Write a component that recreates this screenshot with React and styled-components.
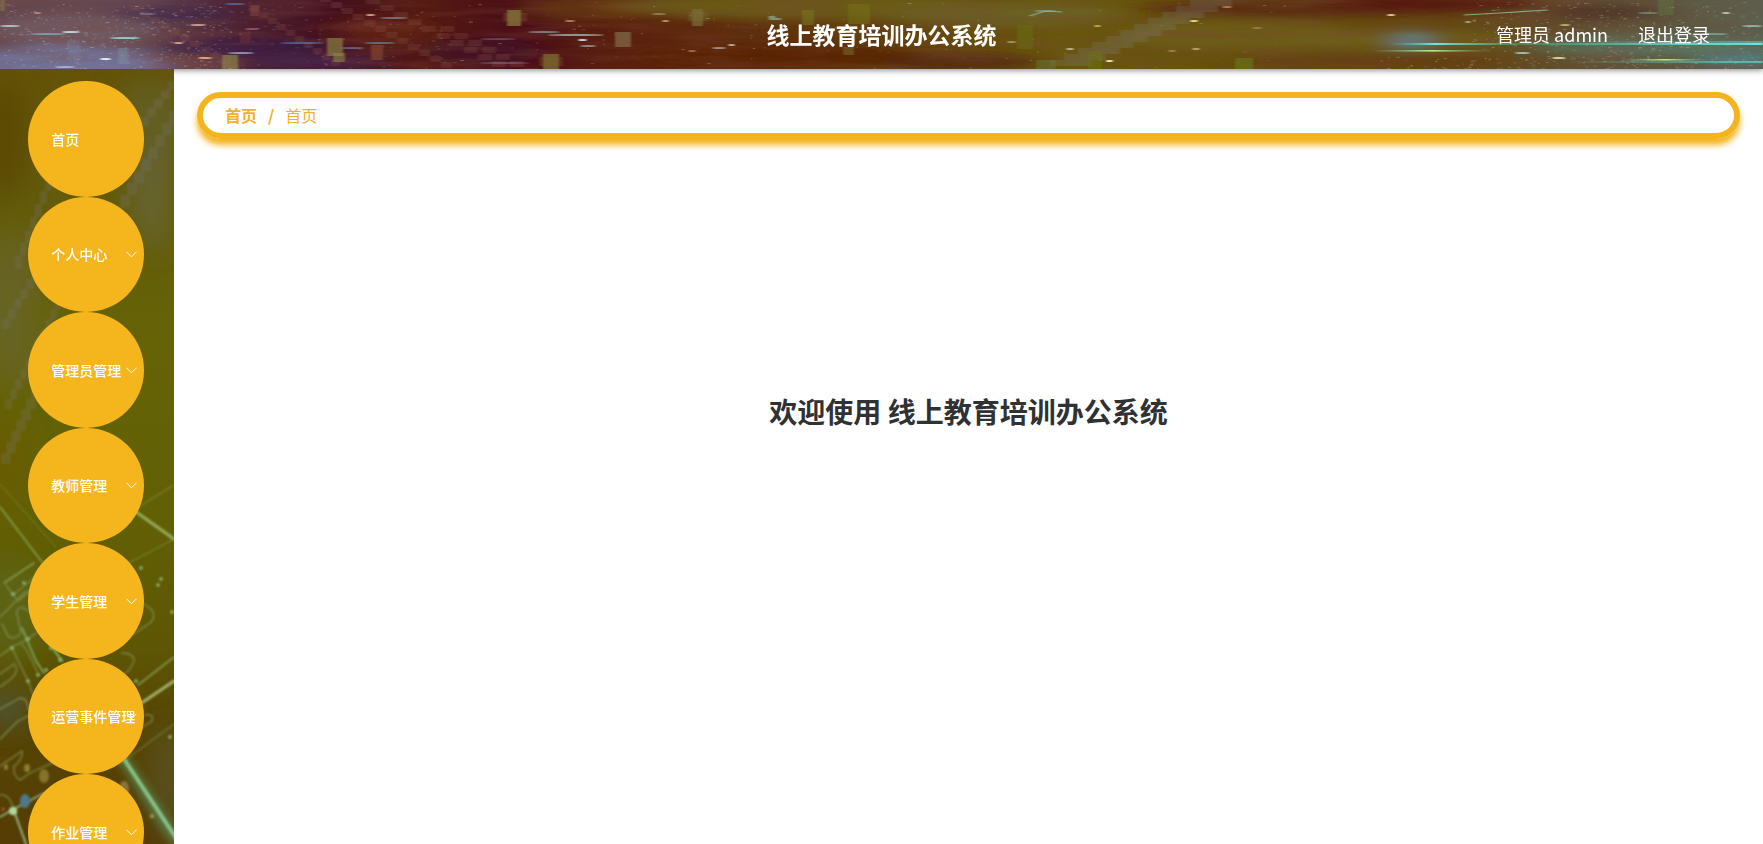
import React from 'react';
import styled, { createGlobalStyle } from 'styled-components';

const MENU = [
  { name: '首页' },
  { name: '个人中心', children: true },
  { name: '管理员管理', children: true },
  { name: '教师管理', children: true },
  { name: '学生管理', children: true },
  { name: '运营事件管理', children: true },
  { name: '作业管理', children: true },
];

// small seeded generator, so the sparkles stay put between renders
const makeRandom = seed => {
  let s = seed;
  return () => {
    s = (s * 16807) % 2147483647;
    return s / 2147483647;
  };
};

const makeSparks = (seed, count, x0, x1, y0, y1, colors) => {
  const rnd = makeRandom(seed);
  return Array.from({ length: count }, () => ({
    x: x0 + rnd() * (x1 - x0),
    y: y0 + rnd() * (y1 - y0),
    w: 1 + rnd() * 3,
    o: 0.1 + rnd() * 0.35,
    c: colors[Math.floor(rnd() * colors.length)],
  }));
};

const SPARKS = [
  ...makeSparks(11, 420, 0, 230, 4, 69, ['#c9b6bf', '#9aa0cc', '#d0a890']),
  ...makeSparks(23, 160, 200, 460, 2, 69, ['#8a6a9c', '#a07080', '#6f78b0']),
  ...makeSparks(37, 100, 460, 1300, 2, 69, ['#c09070', '#a8a070', '#b0b0a0']),
  ...makeSparks(53, 380, 1470, 1763, 2, 69, ['#b8a880', '#90a890', '#c8b8a0']),
  ...makeSparks(71, 130, 1380, 1763, 56, 69, ['#b8a880', '#a8b0a0']),
];

// bright streaks: x, y, width, color, opacity
const STREAKS = [
  [0, 26, 20, '#c5d5dc', 0.8],
  [30, 34, 36, '#7fb5c5', 0.7],
  [62, 32, 18, '#d5efef', 0.8],
  [110, 38, 30, '#9fdcd5', 0.85],
  [100, 59, 11, '#ffffff', 0.85],
  [55, 67, 20, '#b8c8f0', 0.7],
  [34, 13, 7, '#ddb0a0', 0.6],
  [140, 14, 16, '#8090c0', 0.5],
  [190, 25, 16, '#d8b8a8', 0.8],
  [174, 43, 9, '#f0b898', 0.8],
  [198, 58, 14, '#f0b090', 0.9],
  [225, 4, 20, '#5878b8', 0.7],
  [245, 29, 14, '#d08890', 0.5],
  [228, 53, 26, '#b0b8e0', 0.7],
  [280, 43, 44, '#5878a8', 0.7],
  [340, 48, 24, '#7088b0', 0.6],
  [366, 15, 9, '#e8c0a0', 0.8],
  [380, 18, 28, '#7f9098', 0.7],
  [364, 43, 32, '#6898b0', 0.6],
  [480, 39, 36, '#6f7c90', 0.5],
  [528, 32, 32, '#8fa0a8', 0.7],
  [548, 35, 56, '#a8b8b8', 0.75],
  [578, 40, 9, '#d8e8f0', 0.9],
  [580, 46, 16, '#b0b0a8', 0.7],
  [565, 21, 10, '#d0a080', 0.7],
  [480, 63, 50, '#88708a', 0.5],
  [652, 14, 14, '#a8a078', 0.6],
  [662, 21, 7, '#e0c090', 0.7],
  [712, 48, 14, '#a8a898', 0.8],
  [728, 45, 7, '#d8d0b8', 0.8],
  [688, 51, 8, '#c0a080', 0.6],
  [768, 17, 8, '#90b8b8', 0.7],
  [768, 19, 14, '#90b8b8', 0.7],
  [1007, 42, 9, '#a0b058', 0.8],
  [1034, 11, 22, '#8ac0d0', 0.5],
  [1066, 49, 8, '#d0c8b0', 0.8],
  [1094, 26, 7, '#d8d060', 0.7],
  [1106, 61, 7, '#f8f8c0', 0.95],
  [1190, 21, 8, '#f0e8a0', 0.9],
  [1168, 51, 8, '#a89858', 0.7],
  [1192, 49, 8, '#d0b870', 0.8],
  [1222, 7, 10, '#c89868', 0.7],
  [1252, 28, 10, '#a89860', 0.6],
  [1387, 15, 8, '#f0d0a8', 0.9],
  [1465, 22, 6, '#c8c090', 0.8],
  [1560, 25, 10, '#e0d090', 0.7],
  [1515, 53, 15, '#b8d8c8', 0.8],
  [1552, 58, 13, '#e8e0a8', 0.9],
  [1638, 13, 20, '#8aa098', 0.6],
  [1722, 13, 8, '#e0d8b8', 0.8],
  [1742, 26, 20, '#a8d0c8', 0.7],
  [1700, 34, 28, '#80b0a8', 0.7],
];

// blocks: x, y, width, height, color, opacity
const BLOCKS = [
  [0, 0, 5, 11, '#8a8448', 0.5],
  [118, 48, 10, 16, '#8099a8', 0.4],
  [68, 40, 12, 21, '#8095b8', 0.2],
  [222, 55, 16, 14, '#8c8048', 0.7],
  [250, 5, 9, 11, '#8a4a40', 0.5],
  [240, 32, 11, 11, '#7a3a3a', 0.4],
  [327, 38, 16, 18, '#85783c', 0.75],
  [333, 53, 12, 9, '#918848', 0.6],
  [371, 45, 12, 15, '#905030', 0.55],
  [507, 10, 14, 16, '#85743a', 0.8],
  [503, 13, 24, 8, '#85743a', 0.25],
  [543, 54, 16, 15, '#7e6832', 0.8],
  [539, 57, 24, 9, '#7e6832', 0.3],
  [615, 32, 16, 15, '#80694a', 0.75],
  [692, 9, 11, 17, '#7c6c38', 0.7],
  [688, 12, 20, 9, '#7c6c38', 0.3],
  [802, 10, 12, 15, '#767420', 0.6],
  [848, 4, 22, 20, '#74741a', 0.5],
  [843, 47, 11, 8, '#787430', 0.5],
  [1017, 25, 16, 24, '#687012', 0.45],
  [1036, 60, 20, 9, '#68803c', 0.4],
  [1088, 51, 14, 18, '#6c7818', 0.45],
  [1235, 58, 18, 11, '#687c20', 0.6],
  [1658, 0, 16, 15, '#607440', 0.5],
];

const makeStairs = (x, y, dx, dy, count, w, h) =>
  Array.from({ length: count }, (_, i) => [x + i * dx, y + i * dy, w, h]);

const HEADER_STAIRS = [
  ...makeStairs(250, 6, 9, 6, 10, 9, 6),
  ...makeStairs(320, -4, 11, 6, 12, 11, 6),
  ...makeStairs(366, -2, 14, 7, 10, 14, 6),
  ...makeStairs(130, 5, 10, 6, 11, 10, 6),
  ...makeStairs(440, 26, 14, 7, 7, 14, 6),
];

const BAND_STAIRS = [
  ...makeStairs(1050, 60, 14, -6, 11, 42, 6),
  ...makeStairs(1066, 60, 14, -6, 10, 22, 6),
];

const GlobalStyle = createGlobalStyle`
  * {
    box-sizing: border-box;
  }

  body {
    margin: 0;
    background: #fff;
    font-family: 'Noto Sans CJK SC', 'Noto Sans', sans-serif;
  }

  button {
    font-family: inherit;
  }
`;

const HeaderArt = () => (
  <Backdrop viewBox="0 0 1763 69" preserveAspectRatio="none" aria-hidden="true">
    <defs>
      <linearGradient id="headBase">
        <stop offset="0" stopColor="#65484f" />
        <stop offset="0.08" stopColor="#664a54" />
        <stop offset="0.14" stopColor="#4c2032" />
        <stop offset="0.19" stopColor="#45101f" />
        <stop offset="0.24" stopColor="#551c12" />
        <stop offset="0.29" stopColor="#4b0d18" />
        <stop offset="0.35" stopColor="#5a200d" />
        <stop offset="0.43" stopColor="#5f300e" />
        <stop offset="0.5" stopColor="#63410c" />
        <stop offset="0.6" stopColor="#69570f" />
        <stop offset="0.72" stopColor="#674f10" />
        <stop offset="0.82" stopColor="#634812" />
        <stop offset="0.9" stopColor="#625032" />
        <stop offset="1" stopColor="#5b6150" />
      </linearGradient>
      <linearGradient id="beam">
        <stop offset="0" stopColor="#40c8b8" stopOpacity="0" />
        <stop offset="0.12" stopColor="#70e8d8" />
        <stop offset="0.35" stopColor="#48a878" stopOpacity="0.5" />
        <stop offset="0.7" stopColor="#58c8b8" stopOpacity="0.8" />
        <stop offset="1" stopColor="#70f0e8" />
      </linearGradient>
      <linearGradient id="beamGlow">
        <stop offset="0" stopColor="#60d8d0" stopOpacity="0" />
        <stop offset="1" stopColor="#60d8d0" />
      </linearGradient>
      <linearGradient id="shortBeam">
        <stop offset="0" stopColor="#60e0a0" stopOpacity="0" />
        <stop offset="0.5" stopColor="#b8f080" />
        <stop offset="1" stopColor="#60d0a0" stopOpacity="0" />
      </linearGradient>
      <filter id="soft" x="-50%" y="-100%" width="200%" height="300%">
        <feGaussianBlur stdDeviation="16 5" />
      </filter>
      <filter id="line" x="-20%" y="-20%" width="140%" height="140%">
        <feGaussianBlur stdDeviation="1 0.5" />
      </filter>
      <filter id="fine" x="0" y="0" width="100%" height="100%">
        <feGaussianBlur stdDeviation="0.6 0.3" />
      </filter>
      <filter id="grain" x="0" y="0" width="100%" height="100%">
        <feTurbulence type="fractalNoise" baseFrequency="0.012 0.13" numOctaves="3" seed="4" />
        <feColorMatrix values="0 0 0 0 0.2  0 0 0 0 0.06  0 0 0 0 0.04  2.4 0 0 0 -0.95" />
      </filter>
    </defs>
    <rect width="1763" height="69" fill="url(#headBase)" />
    <g filter="url(#soft)">
      <ellipse cx="60" cy="66" rx="110" ry="20" fill="#747ca6" opacity="0.8" />
      <ellipse cx="70" cy="30" rx="80" ry="16" fill="#78646a" opacity="0.6" />
      <ellipse cx="170" cy="14" rx="60" ry="7" fill="#38224c" opacity="0.7" />
      <ellipse cx="245" cy="48" rx="80" ry="10" fill="#38184a" opacity="0.7" />
      <ellipse cx="320" cy="62" rx="70" ry="8" fill="#4a2855" opacity="0.7" />
      <ellipse cx="190" cy="64" rx="50" ry="8" fill="#785050" opacity="0.6" />
      <ellipse cx="380" cy="30" rx="50" ry="14" fill="#662410" opacity="0.7" />
      <ellipse cx="590" cy="8" rx="70" ry="12" fill="#684010" opacity="0.7" />
      <ellipse cx="480" cy="52" rx="60" ry="14" fill="#400c28" opacity="0.7" />
      <ellipse cx="800" cy="6" rx="190" ry="14" fill="#6c5c14" opacity="0.9" />
      <ellipse cx="780" cy="56" rx="140" ry="12" fill="#572008" opacity="0.8" />
      <ellipse cx="960" cy="62" rx="80" ry="9" fill="#522414" opacity="0.8" />
      <ellipse cx="1000" cy="14" rx="120" ry="12" fill="#6c6428" opacity="0.8" />
      <ellipse cx="1240" cy="36" rx="120" ry="14" fill="#706018" opacity="0.7" />
      <ellipse cx="1300" cy="8" rx="160" ry="9" fill="#5a2810" opacity="0.9" />
      <ellipse cx="1430" cy="3" rx="110" ry="9" fill="#55180e" opacity="0.9" />
      <ellipse cx="1400" cy="40" rx="120" ry="10" fill="#70601c" opacity="0.8" />
      <ellipse cx="1370" cy="62" rx="140" ry="6" fill="#643c10" opacity="0.8" />
      <ellipse cx="1600" cy="12" rx="60" ry="8" fill="#4a2c24" opacity="0.7" />
      <ellipse cx="1650" cy="46" rx="120" ry="12" fill="#58806c" opacity="0.6" />
      <ellipse cx="1412" cy="41" rx="14" ry="9" fill="#5898b8" opacity="0.9" />
      <ellipse cx="1740" cy="60" rx="40" ry="6" fill="#5090a0" opacity="0.7" />
    </g>
    <rect width="1763" height="69" filter="url(#grain)" opacity="0.3" />
    <g filter="url(#line)" fill="#7c7c78" opacity="0.32">
      {BAND_STAIRS.map(([x, y, w, h], i) => (
        <rect key={i} x={x} y={y} width={w} height={h} fillOpacity="0.8" />
      ))}
    </g>
    <g filter="url(#line)" fill="#8c5448" opacity="0.26">
      {HEADER_STAIRS.map(([x, y, w, h], i) => (
        <rect key={i} x={x} y={y} width={w} height={h} />
      ))}
    </g>
    <g filter="url(#line)">
      {BLOCKS.map(([x, y, w, h, c, o], i) => (
        <rect key={i} x={x} y={y} width={w} height={h} fill={c} opacity={o} />
      ))}
    </g>
    <g filter="url(#fine)">
      {SPARKS.map((s, i) => (
        <rect key={i} x={s.x} y={s.y} width={s.w} height="1" fill={s.c} opacity={s.o} />
      ))}
    </g>
    <g filter="url(#line)">
      {STREAKS.map(([x, y, w, c, o], i) => (
        <ellipse key={i} cx={x + w / 2} cy={y} rx={w / 2} ry="1" fill={c} opacity={o} />
      ))}
      <path d="M1029 16 L1046 11 L1062 12" stroke="#90c4cc" strokeWidth="1.2" fill="none" opacity="0.7" />
      <path d="M1464 15 L1500 13 L1548 10" stroke="#88c8a0" strokeWidth="1.2" fill="none" opacity="0.8" />
      <rect x="1390" y="43" width="373" height="2" fill="url(#beam)" />
      <rect x="1560" y="41" width="203" height="4" fill="url(#beamGlow)" opacity="0.5" />
      <rect x="1372" y="50" width="120" height="1.6" fill="url(#shortBeam)" />
      <rect x="1560" y="61" width="203" height="2" fill="url(#beamGlow)" opacity="0.7" />
      <rect x="1620" y="59" width="90" height="1.6" fill="url(#shortBeam)" />
    </g>
  </Backdrop>
);

const SIDE_STAIRS = [
  ...makeStairs(168, 12, -7, 9, 10, 9, 9),
  ...makeStairs(176, 30, -7, 12, 14, 10, 12),
  ...makeStairs(60, 70, -5, 13, 10, 7, 13),
  ...makeStairs(74, 130, -6, 10, 13, 8, 10),
  ...makeStairs(60, 220, -5, 10, 12, 7, 10),
  ...makeStairs(46, 285, -5, 11, 10, 10, 11),
];

const SideArt = () => (
  <Backdrop viewBox="0 0 174 775" preserveAspectRatio="none" aria-hidden="true">
    <defs>
      <linearGradient id="sideBase" x1="0" y1="0" x2="0" y2="1">
        <stop offset="0" stopColor="#645307" />
        <stop offset="0.14" stopColor="#635a0c" />
        <stop offset="0.35" stopColor="#656306" />
        <stop offset="0.58" stopColor="#626005" />
        <stop offset="0.75" stopColor="#5d5604" />
        <stop offset="0.84" stopColor="#574604" />
        <stop offset="1" stopColor="#553c04" />
      </linearGradient>
      <filter id="haze" x="-50%" y="-50%" width="200%" height="200%">
        <feGaussianBlur stdDeviation="14" />
      </filter>
      <filter id="glow" x="-30%" y="-30%" width="160%" height="160%">
        <feGaussianBlur stdDeviation="0.8" />
      </filter>
      <filter id="wide" x="-60%" y="-60%" width="220%" height="220%">
        <feGaussianBlur stdDeviation="4" />
      </filter>
    </defs>
    <rect width="174" height="775" fill="url(#sideBase)" />
    <g filter="url(#haze)">
      <ellipse cx="4" cy="70" rx="22" ry="60" fill="#5b4600" opacity="0.8" />
      <ellipse cx="150" cy="60" rx="40" ry="50" fill="#626026" opacity="0.8" />
      <ellipse cx="152" cy="130" rx="16" ry="50" fill="#6a6848" opacity="0.7" />
      <ellipse cx="10" cy="240" rx="30" ry="80" fill="#6a642c" opacity="0.7" />
      <ellipse cx="6" cy="400" rx="20" ry="50" fill="#6c5808" opacity="0.7" />
      <ellipse cx="10" cy="540" rx="40" ry="50" fill="#5c6a1a" opacity="0.6" />
      <ellipse cx="168" cy="715" rx="14" ry="60" fill="#5c6848" opacity="0.5" />
      <ellipse cx="6" cy="640" rx="20" ry="16" fill="#4a5a4a" opacity="0.9" />
    </g>
    <g filter="url(#glow)" fill="#77746a" opacity="0.3">
      {SIDE_STAIRS.map(([x, y, w, h], i) => (
        <rect key={i} x={x} y={y} width={w} height={h} />
      ))}
    </g>
    <g filter="url(#glow)" fill="none" strokeLinecap="round" strokeLinejoin="round">
      <g stroke="#8fae62" strokeWidth="1.8" opacity="0.75">
        <path d="M0 438 L42 493" />
        <path d="M0 415 L56 478" strokeOpacity="0.3" />
        <path d="M4 514 L34 494" />
        <path d="M14 525 L36 507 L60 504" strokeOpacity="0.5" />
        <path d="M132 442 L174 416" strokeOpacity="0.45" />
        <path d="M124 496 L144 486 L174 470" strokeOpacity="0.45" />
        <path d="M138 616 L174 588" />
        <path d="M120 695 L174 655" strokeOpacity="0.45" />
      </g>
      <path d="M132 440 L174 470" stroke="#a8c47c" strokeWidth="3" opacity="0.75" />
      <path d="M140 635 L174 612" stroke="#b4cc8c" strokeWidth="3" opacity="0.8" />
      <g stroke="#87955a" strokeWidth="1.8" opacity="0.6">
        <path d="M2 555 L8 567 Q14 572 21 564 L18 549 Q14 540 22 538 L38 548" />
        <path d="M6 516 L18 532 L30 522" />
        <path d="M0 548 L24 524 L36 518" />
        <path d="M0 587 L12 578 L28 570 L36 564" />
        <path d="M12 579 L28 612 L34 628 L42 622" />
        <path d="M22 575 Q28 582 38 605" />
        <path d="M0 605 L14 595 Q20 600 12 609 L0 618" />
        <path d="M0 640 L20 629 Q28 629 28 640" />
        <path d="M0 670 L18 652 L30 646" />
        <path d="M14 697 Q12 706 20 711 L30 704 L52 694 L74 700" />
        <path d="M0 697 L22 682 Q24 688 14 698" />
        <path d="M0 726 Q10 724 14 742" />
        <path d="M143 534 L152 541 Q156 548 150 554 L132 566" />
        <path d="M122 584 Q134 584 134 592 Q128 606 120 606" />
        <path d="M145 646 Q154 644 152 652 L140 660 L128 680" />
      </g>
      <path d="M22 559 L36 592 L44 604" stroke="#86c07c" strokeWidth="1.7" opacity="0.8" />
      <path d="M0 748 L14 740 L44 724" stroke="#9cc8a0" strokeWidth="1.8" opacity="0.8" />
      <path d="M14 742 L26 775" stroke="#a8d8a8" strokeWidth="2" opacity="0.8" />
      <path d="M52 578 L62 592" stroke="#86c07c" strokeWidth="1.7" />
    </g>
    <path d="M122 688 L178 775" stroke="#5cae78" strokeWidth="11" opacity="0.5" filter="url(#wide)" />
    <path d="M124 690 L178 772" stroke="#94d69c" strokeWidth="4" opacity="0.8" filter="url(#glow)" />
    <g filter="url(#glow)">
      <ellipse cx="44" cy="707" rx="5" ry="7" fill="#928036" opacity="0.8" />
      <ellipse cx="27" cy="699" rx="3" ry="4" fill="#8e8030" />
      <ellipse cx="6" cy="698" rx="2" ry="3" fill="#8e8030" />
      <ellipse cx="25" cy="732" rx="5" ry="7" fill="#50788c" />
      <circle cx="13" cy="742" r="4" fill="#b0d8a0" />
      <circle cx="3" cy="740" r="1.5" fill="#c06030" />
      <ellipse cx="124" cy="720" rx="5" ry="8" fill="#8a7440" />
      <circle cx="152" cy="747" r="2" fill="#a89850" />
      {[
        [13, 525], [24, 514], [28, 570], [12, 579], [38, 606], [28, 612],
        [46, 601], [51, 579], [60, 591], [141, 499], [161, 510], [158, 516],
        [136, 612], [170, 668], [172, 543],
      ].map(([cx, cy]) => (
        <circle key={`${cx}-${cy}`} cx={cx} cy={cy} r="1.8" fill="#90b878" />
      ))}
    </g>
  </Backdrop>
);

const App = () => {
  return (
    <Page>
      <GlobalStyle />
      <Header>
        <HeaderArt />
        <Title>线上教育培训办公系统</Title>
        <UserBox>
          <span>管理员 admin</span>
          <LogoutButton type="button">退出登录</LogoutButton>
        </UserBox>
      </Header>
      <Body>
        <Sidebar>
          <SideArt />
          <MenuList>
            {MENU.map(item => (
              <MenuItem key={item.name}>
                <MenuButton type="button" aria-haspopup={item.children}>
                  {item.name}
                  {item.children && (
                    <Arrow viewBox="0 0 11 7" aria-hidden="true">
                      <path d="M0.5 0.8 L5.5 5.8 L10.5 0.8" />
                    </Arrow>
                  )}
                </MenuButton>
              </MenuItem>
            ))}
          </MenuList>
        </Sidebar>
        <Main>
          <Breadcrumb aria-label="breadcrumb">
            <CrumbLink href="#/">首页</CrumbLink>
            <Slash>/</Slash>
            <span>首页</span>
          </Breadcrumb>
          <Welcome>欢迎使用 线上教育培训办公系统</Welcome>
        </Main>
      </Body>
    </Page>
  );
};

const Page = styled.div`
  display: flex;
  flex-direction: column;
  height: 100vh;
  overflow: hidden;
`;

const Backdrop = styled.svg`
  position: absolute;
  top: 0;
  left: 0;
  width: 100%;
  height: 100%;
`;

const Header = styled.header`
  position: relative;
  display: grid;
  grid-template-columns: 1fr auto 1fr;
  align-items: center;
  flex: none;
  height: 69px;
  padding: 0 53px 2px;
  color: #fff;
  box-shadow: 0 1px 6px rgba(0, 0, 0, 0.5);
`;

const Title = styled.h1`
  position: relative;
  grid-column: 2;
  margin: 0;
  font-size: 23px;
  font-weight: 700;
  line-height: 32px;
`;

const UserBox = styled.div`
  position: relative;
  display: flex;
  justify-content: flex-end;
  gap: 30px;
  font-size: 18px;
  line-height: 28px;
`;

const LogoutButton = styled.button`
  padding: 0;
  border: 0;
  background: none;
  color: inherit;
  font-size: inherit;
  line-height: inherit;
  cursor: pointer;
`;

const Body = styled.div`
  display: flex;
  flex: 1;
  min-height: 0;
`;

const Sidebar = styled.aside`
  position: relative;
  flex: none;
  width: 174px;
  overflow: hidden;
`;

const MenuList = styled.ul`
  position: relative;
  height: 100%;
  margin: 0;
  padding: 12px 11px 0 9px;
  overflow-y: auto;
  list-style: none;
  scrollbar-width: none;
`;

const MenuItem = styled.li`
  width: 75%;
  margin: 0 auto;
  aspect-ratio: 1;
`;

const MenuButton = styled.button`
  position: relative;
  display: flex;
  align-items: center;
  width: 100%;
  height: 100%;
  padding: 0 0 0 23px;
  border: 0;
  border-radius: 50%;
  background: #f5b51c;
  color: #fff;
  font-size: 14px;
  font-weight: 500;
  white-space: nowrap;
  cursor: pointer;
`;

const Arrow = styled.svg`
  position: absolute;
  top: 50%;
  right: 7px;
  width: 11px;
  height: 7px;
  margin-top: -3px;
  fill: none;
  stroke: #fff;
`;

const Main = styled.main`
  flex: 1;
  min-width: 0;
  padding: 23px;
`;

const Breadcrumb = styled.nav`
  display: flex;
  align-items: center;
  height: 47px;
  padding: 0 22px 2px;
  border: 6px solid #f3b41f;
  border-radius: 24px;
  box-shadow: 0 6px 6px #f3b41f;
  color: #f0b030;
  font-size: 16px;
  line-height: 24px;
`;

const CrumbLink = styled.a`
  color: inherit;
  font-weight: 700;
  text-decoration: none;
`;

const Slash = styled.span`
  margin: 0 11px;
  font-weight: 700;
`;

const Welcome = styled.h2`
  margin: 252px 0 0;
  color: #303133;
  font-size: 28px;
  font-weight: 700;
  line-height: 40px;
  text-align: center;
`;

export default App;
